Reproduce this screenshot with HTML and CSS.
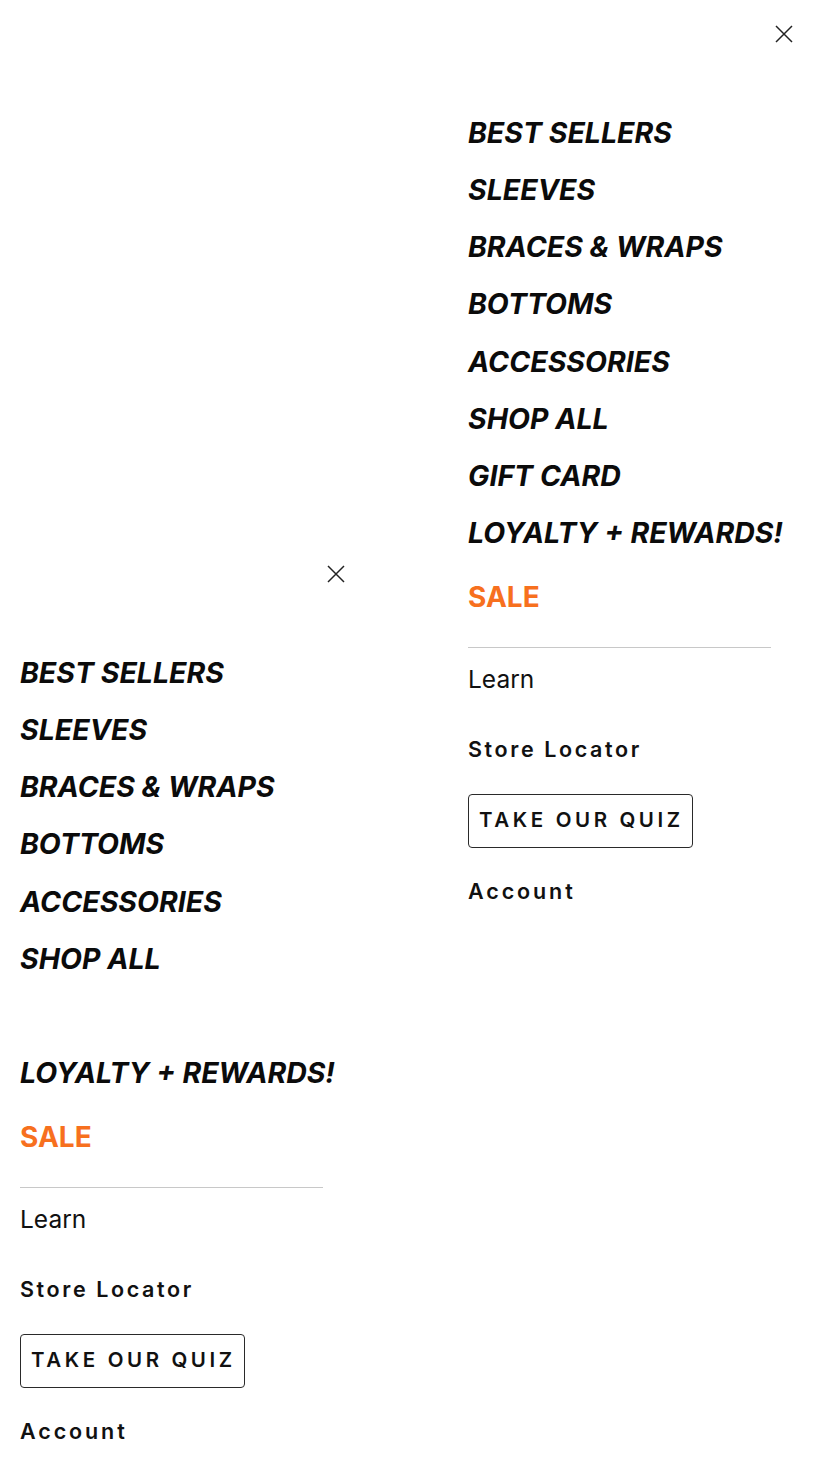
FILE: index.html
```html
<!DOCTYPE html>
<html lang="en">
<head>
<meta charset="utf-8">
<title>Menu</title>
<link rel="stylesheet" href="styles.css">
</head>
<body>
<div class="stage">
  <nav class="drawer drawer--lower">
    <div class="drawer__top">
      <button class="close" aria-label="Close">
        <svg viewBox="0 0 18 18" width="18" height="18"><path d="M1 1L17 17M17 1L1 17"/></svg>
      </button>
    </div>
    <ul class="menu">
      <li class="menu__item">BEST SELLERS</li>
      <li class="menu__item">SLEEVES</li>
      <li class="menu__item">BRACES &amp; WRAPS</li>
      <li class="menu__item">BOTTOMS</li>
      <li class="menu__item">ACCESSORIES</li>
      <li class="menu__item">SHOP ALL</li>
      <li class="menu__item menu__item--hidden">GIFT CARD</li>
      <li class="menu__item">LOYALTY + REWARDS!</li>
      <li class="menu__item menu__item--sale">SALE</li>
    </ul>
    <hr class="divider">
    <div class="links">
      <div class="link link--learn">Learn</div>
      <div class="link link--store">Store Locator</div>
      <div class="quiz">TAKE OUR QUIZ</div>
      <div class="link link--account">Account</div>
    </div>
  </nav>
  <nav class="drawer drawer--upper">
    <div class="drawer__top">
      <button class="close" aria-label="Close">
        <svg viewBox="0 0 18 18" width="18" height="18"><path d="M1 1L17 17M17 1L1 17"/></svg>
      </button>
    </div>
    <ul class="menu">
      <li class="menu__item">BEST SELLERS</li>
      <li class="menu__item">SLEEVES</li>
      <li class="menu__item">BRACES &amp; WRAPS</li>
      <li class="menu__item">BOTTOMS</li>
      <li class="menu__item">ACCESSORIES</li>
      <li class="menu__item">SHOP ALL</li>
      <li class="menu__item">GIFT CARD</li>
      <li class="menu__item">LOYALTY + REWARDS!</li>
      <li class="menu__item menu__item--sale">SALE</li>
    </ul>
    <hr class="divider">
    <div class="links">
      <div class="link link--learn">Learn</div>
      <div class="link link--store">Store Locator</div>
      <div class="quiz">TAKE OUR QUIZ</div>
      <div class="link link--account">Account</div>
    </div>
  </nav>
</div>
</body>
</html>
```
FILE: styles.css
```css
html, body {
  margin: 0;
  padding: 0;
  background: #fff;
  overflow: hidden;
}
body {
  font-family: Inter, "Liberation Sans", sans-serif;
  color: #111;
  width: 815px;
  height: 1481px;
}
.stage {
  display: flex;
  justify-content: space-between;
  align-items: flex-start;
}
.drawer {
  width: 367px;
  box-sizing: border-box;
  padding: 0 22px 0 20px;
  display: flex;
  flex-direction: column;
}
.drawer--lower {
  margin-top: 540px;
}
.drawer__top {
  display: flex;
  justify-content: flex-end;
  padding-top: 25px;
  height: 61px;
  box-sizing: border-box;
}
.close {
  border: 0;
  background: none;
  padding: 0;
  margin: 0;
  width: 18px;
  height: 18px;
  display: block;
}
.close svg {
  display: block;
  stroke: #222;
  stroke-width: 1.5;
  fill: none;
}
.menu {
  list-style: none;
  margin: 43px 0 0;
  padding: 0;
}
.menu__item {
  font-size: 28.5px;
  font-weight: 700;
  font-style: italic;
  line-height: 57.14px;
  color: #0b0b0b;
  white-space: nowrap;
}
.menu__item--hidden {
  visibility: hidden;
}
.menu__item--sale {
  font-style: normal;
  color: #f7701e;
  font-size: 28px;
  margin-top: 8px;
}
.divider {
  width: 303px;
  margin: 21px 0 0;
  border: 0;
  border-top: 1px solid #c8c8c8;
  height: 0;
}
.links {
  display: flex;
  flex-direction: column;
  align-items: flex-start;
}
.link {
  line-height: 30px;
  color: #111;
}
.link--learn {
  font-size: 24.5px;
  font-weight: 400;
  margin-top: 16px;
}
.link--store {
  font-size: 21.5px;
  font-weight: 600;
  letter-spacing: 2.6px;
  margin-top: 40px;
}
.link--account {
  font-size: 21.5px;
  font-weight: 600;
  letter-spacing: 2.9px;
  margin-top: 28px;
}
.quiz {
  margin-top: 30px;
  height: 54px;
  box-sizing: border-box;
  border: 1px solid #2a2a2a;
  border-radius: 4px;
  padding: 0 8px 3px 10px;
  display: flex;
  align-items: center;
  font-size: 20.5px;
  font-weight: 600;
  letter-spacing: 3.6px;
  color: #111;
}
```
